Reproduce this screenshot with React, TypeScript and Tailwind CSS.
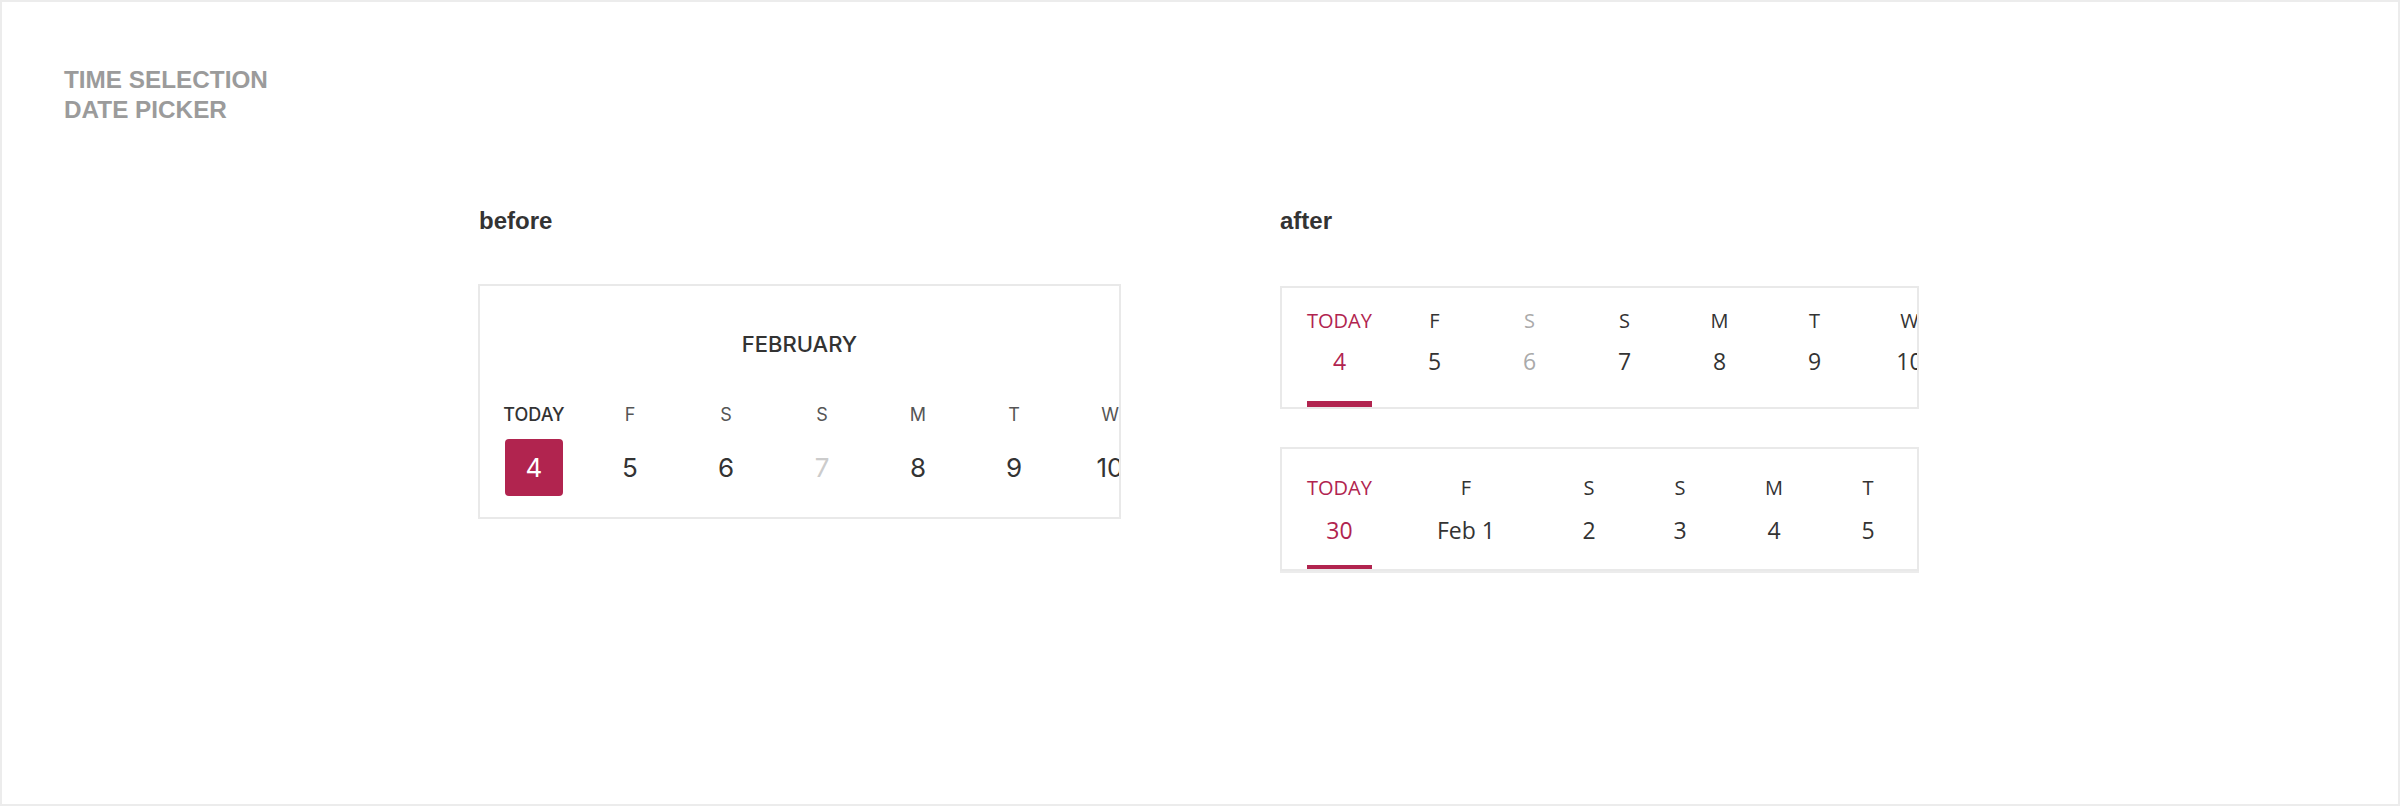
import React from "react";

const RED = "text-[#b1244f]";

function BeforeCard() {
  const days = [
    { l: "TODAY", n: "4", today: true },
    { l: "F", n: "5" },
    { l: "S", n: "6" },
    { l: "S", n: "7", muted: true },
    { l: "M", n: "8" },
    { l: "T", n: "9" },
    { l: "W", n: "10" },
  ];
  return (
    <div className="mt-[48px] w-[643px] h-[235px] border-2 border-[#e9e9e9] bg-white overflow-hidden font-['Inter',sans-serif]">
      <div className="pt-[44px] h-[72px] text-center text-[22px] leading-[28px] font-medium text-[#333333]">
        FEBRUARY
      </div>
      <div className="mt-[45px] flex pl-[6px]">
        {days.map((d, i) => (
          <div key={i} className="w-[96px] shrink-0 flex flex-col items-center">
            <div
              className={
                d.today
                  ? "h-[24px] leading-[24px] text-[18px] font-medium text-[#333333]"
                  : "h-[24px] leading-[24px] text-[18px] text-[#555555]"
              }
            >
              {d.l}
            </div>
            {d.today ? (
              <div className="mt-[12px] w-[58px] h-[57px] rounded-[4px] bg-[#b1244f] flex items-center justify-center text-[26px] text-white">
                {d.n}
              </div>
            ) : (
              <div
                className={
                  d.muted
                    ? "mt-[12px] h-[57px] flex items-center text-[26px] text-[#cccccc]"
                    : "mt-[12px] h-[57px] flex items-center text-[26px] text-[#333333]"
                }
              >
                {d.n}
              </div>
            )}
          </div>
        ))}
      </div>
    </div>
  );
}

type Day = { l: string; n: string; w: string; today?: boolean; muted?: boolean };

function AfterCard({
  days,
  pt,
  gap1,
  gap2,
  barH,
  extraClass,
}: {
  days: Day[];
  pt: string;
  gap1: string;
  gap2: string;
  barH: string;
  extraClass: string;
}) {
  return (
    <div
      className={
        "w-[639px] border-2 border-[#e9e9e9] bg-white overflow-hidden font-['Open_Sans',sans-serif] " +
        extraClass
      }
    >
      <div className={"flex pl-[10px] " + pt}>
        {days.map((d, i) => (
          <div key={i} className={"shrink-0 flex flex-col items-center " + d.w}>
            <div
              className={
                "h-[24px] leading-[24px] text-[20px] " +
                (d.today ? RED : d.muted ? "text-[#aaaaaa]" : "text-[#333333]")
              }
            >
              {d.l}
            </div>
            <div
              className={
                "h-[30px] leading-[30px] text-[23px] whitespace-nowrap " +
                gap1 +
                " " +
                (d.today ? RED : d.muted ? "text-[#aaaaaa]" : "text-[#333333]")
              }
            >
              {d.n}
            </div>
            <div
              className={
                gap2 + " w-[65px] " + barH + " " + (d.today ? "bg-[#b1244f]" : "bg-transparent")
              }
            />
          </div>
        ))}
      </div>
    </div>
  );
}

export default function App() {
  const after1: Day[] = [
    { l: "TODAY", n: "4", w: "w-[95px]", today: true },
    { l: "F", n: "5", w: "w-[95px]" },
    { l: "S", n: "6", w: "w-[95px]", muted: true },
    { l: "S", n: "7", w: "w-[95px]" },
    { l: "M", n: "8", w: "w-[95px]" },
    { l: "T", n: "9", w: "w-[95px]" },
    { l: "W", n: "10", w: "w-[95px]" },
  ];
  const after2: Day[] = [
    { l: "TODAY", n: "30", w: "w-[95px]", today: true },
    { l: "F", n: "Feb 1", w: "w-[158px]" },
    { l: "S", n: "2", w: "w-[88px]" },
    { l: "S", n: "3", w: "w-[94px]" },
    { l: "M", n: "4", w: "w-[94px]" },
    { l: "T", n: "5", w: "w-[94px]" },
  ];
  return (
    <div className="w-[2400px] h-[806px] border-2 border-[#ececec] bg-white overflow-hidden">
      <div className="pl-[62px] pt-[63px] font-['Liberation_Sans',Arial,sans-serif] font-bold text-[24.3px] leading-[30px] text-[#9b9b9b]">
        <div>TIME SELECTION</div>
        <div>DATE PICKER</div>
      </div>
      <div className="mt-[81px] pl-[476px] flex">
        <div className="w-[643px] shrink-0">
          <div className="pl-[1px] font-['Liberation_Sans',Arial,sans-serif] font-bold text-[24px] leading-[30px] text-[#333333]">
            before
          </div>
          <BeforeCard />
        </div>
        <div className="ml-[159px] w-[639px] shrink-0">
          <div className="font-['Liberation_Sans',Arial,sans-serif] font-bold text-[24px] leading-[30px] text-[#333333]">
            after
          </div>
          <div className="mt-[50px]">
            <AfterCard
              days={after1}
              pt="pt-[21px]"
              gap1="mt-[13px]"
              gap2="mt-[25px]"
              barH="h-[6px]"
              extraClass=""
            />
          </div>
          <div className="mt-[38px]">
            <AfterCard
              days={after2}
              pt="pt-[27px]"
              gap1="mt-[15px]"
              gap2="mt-[20px]"
              barH="h-[4px]"
              extraClass="shadow-[0_2px_0_#ececec]"
            />
          </div>
        </div>
      </div>
    </div>
  );
}
